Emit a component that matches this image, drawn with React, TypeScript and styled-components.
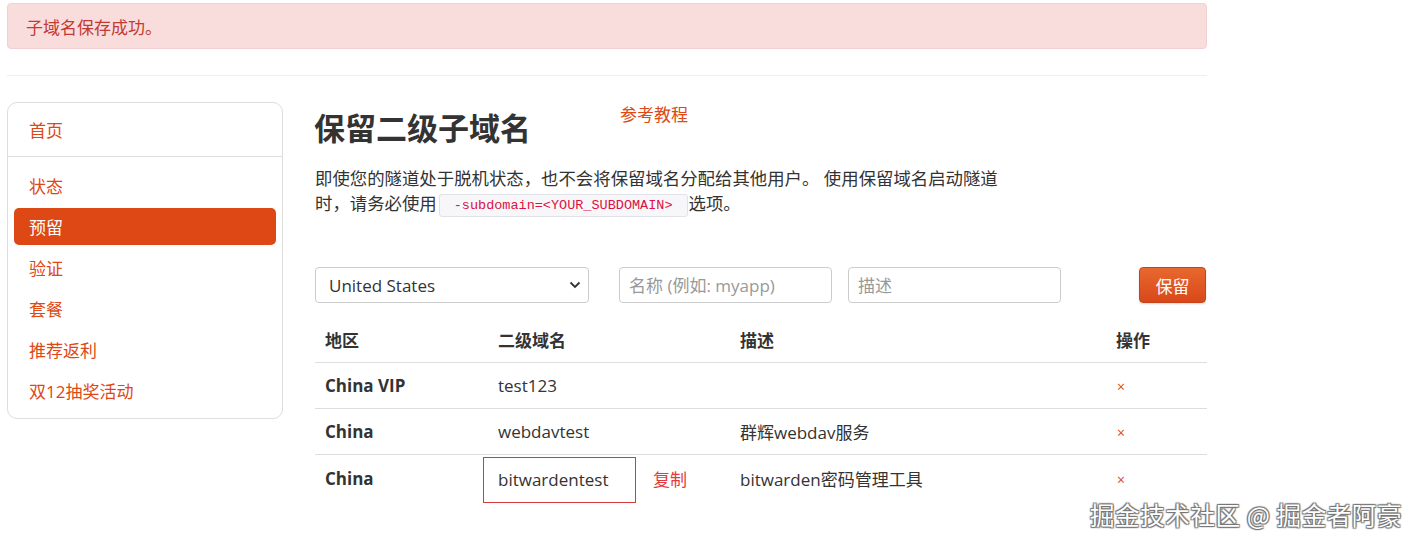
import React from "react";
import styled, { createGlobalStyle } from "styled-components";

const Global = createGlobalStyle`
  html, body { margin: 0; padding: 0; background: #fff; }
  body {
    font-family: "Open Sans", "Noto Sans CJK SC", sans-serif;
    color: #333;
    font-size: 17px;
  }
  * { box-sizing: border-box; }
`;

const ORANGE = "#dd4814";
const CJK = `"Open Sans", "Noto Sans CJK SC", sans-serif`;

const Page = styled.div`
  position: relative;
  width: 1419px;
  height: 543px;
  padding: 3px 0 0 7px;
  overflow: hidden;
`;

const Container = styled.div`
  width: 1200px;
`;

const Alert = styled.div`
  height: 46px;
  background: #f9dddd;
  border: 1px solid #f3cfcf;
  border-radius: 4px;
  color: #c23a32;
  display: flex;
  align-items: center;
  padding-left: 18px;
  font-size: 17px;
`;

const Rule = styled.hr`
  border: none;
  border-top: 1px solid #eee;
  margin: 26px 0 26px;
`;

const Layout = styled.div`
  display: grid;
  grid-template-columns: 276px 892px;
  column-gap: 32px;
  align-items: start;
`;

const Sidebar = styled.nav`
  border: 1px solid #ddd;
  border-radius: 10px;
  background: #fff;
`;

const SideHead = styled.a`
  display: flex;
  align-items: center;
  height: 54px;
  padding-left: 21px;
  color: ${ORANGE};
  border-bottom: 1px solid #ddd;
  text-decoration: none;
`;

const SideList = styled.div`
  display: flex;
  flex-direction: column;
  gap: 4px;
  padding: 10px 6px 9px;
`;

const SideItem = styled.a<{ $active?: boolean }>`
  display: flex;
  align-items: center;
  height: 37px;
  padding-left: 15px;
  border-radius: 5px;
  text-decoration: none;
  color: ${(p) => (p.$active ? "#fff" : ORANGE)};
  background: ${(p) => (p.$active ? ORANGE : "transparent")};
`;

const Main = styled.main`
  display: flex;
  flex-direction: column;
`;

const TitleRow = styled.div`
  display: flex;
  align-items: flex-start;
  height: 60px;
`;

const Title = styled.h1`
  margin: 6px 0 0 -1px;
  font-size: 31px;
  font-weight: 700;
  color: #333;
  line-height: 40px;
  font-family: ${CJK};
`;

const DocLink = styled.a`
  color: ${ORANGE};
  margin: 1px 0 0 89px;
  font-size: 17px;
  text-decoration: none;
  line-height: 24px;
`;

const Lead = styled.p`
  margin: 4px 0 0;
  max-width: 700px;
  line-height: 25px;
  font-size: 17.4px;
`;

const Code = styled.code`
  display: inline-block;
  font-family: "Liberation Mono", "DejaVu Sans Mono", monospace;
  font-size: 13.5px;
  line-height: 21px;
  color: #d14;
  background: #f7f7f9;
  border: 1px solid #e1e1e8;
  border-radius: 3px;
  padding: 0 14px;
  margin: 0 1px 0 2px;
  vertical-align: 1px;
`;

const FormRow = styled.form`
  display: flex;
  align-items: center;
  margin-top: 50px;
  height: 36px;
`;

const Select = styled.div`
  width: 274px;
  height: 36px;
  border: 1px solid #ccc;
  border-radius: 4px;
  display: flex;
  align-items: center;
  justify-content: space-between;
  padding: 0 7px 0 13px;
  color: #333;
  font-size: 17px;
`;

const Field = styled.input<{ $ml: number }>`
  width: 213px;
  height: 36px;
  margin-left: ${(p) => p.$ml}px;
  border: 1px solid #ccc;
  border-radius: 4px;
  padding: 0 9px;
  font-size: 17px;
  font-family: ${CJK};
  color: #333;
  &::placeholder { color: #999; }
`;

const Button = styled.button`
  margin-left: auto;
  margin-right: 1px;
  width: 67px;
  height: 36px;
  border: 1px solid #c8431a;
  border-radius: 4px;
  background: linear-gradient(#e8682f, #d9481a);
  color: #fff;
  font-size: 17px;
  font-family: ${CJK};
  box-shadow: 0 1px 2px rgba(0,0,0,0.15);
`;

const Table = styled.table`
  margin-top: 15px;
  width: 892px;
  border-collapse: collapse;
  table-layout: fixed;
`;

const Th = styled.th<{ $w: number }>`
  width: ${(p) => p.$w}px;
  text-align: left;
  font-weight: 700;
  height: 44px;
  padding: 0 10px;
  border-bottom: 1px solid #ddd;
  font-size: 17px;
`;

const Tr = styled.tr<{ $last?: boolean }>`
  border-bottom: ${(p) => (p.$last ? "none" : "1px solid #ddd")};
`;

const Td = styled.td<{ $bold?: boolean }>`
  height: 46px;
  padding: 0 10px;
  font-weight: ${(p) => (p.$bold ? 700 : 400)};
  font-size: 17px;
  vertical-align: middle;
`;

const Delete = styled.a`
  color: ${ORANGE};
  font-size: 14px;
  padding-left: 1px;
  text-decoration: none;
`;

const CopyWrap = styled.div`
  display: flex;
  align-items: center;
  gap: 17px;
`;

const Boxed = styled.span`
  display: inline-flex;
  align-items: center;
  height: 46px;
  width: 153px;
  margin: 2px 0 0 -15px;
  padding-left: 14px;
  border: 1px solid #d23a3f;
`;

const CopyLink = styled.span`
  color: #e4393c;
  font-size: 17px;
`;

const Watermark = styled.div`
  position: absolute;
  left: 1090px;
  top: 497px;
  font-size: 24.5px;
  color: #fff;
  font-family: "Noto Sans CJK SC", sans-serif;
  letter-spacing: 0.6px;
  text-shadow: 0 0 1px #666, 1px 1px 1px #777, -1px -1px 1px #777, 1px -1px 1px #777, -1px 1px 1px #777;
`;

const Chevron = () => (
  <svg width="12" height="8" viewBox="0 0 12 8">
    <path d="M1.5 1.5 L6 6 L10.5 1.5" fill="none" stroke="#333" strokeWidth="1.8" />
  </svg>
);

const rows = [
  { region: "China VIP", sub: "test123", desc: "" },
  { region: "China", sub: "webdavtest", desc: "群辉webdav服务" },
  { region: "China", sub: "bitwardentest", desc: "bitwarden密码管理工具", boxed: true },
];

export default function App() {
  return (
    <>
      <Global />
      <Page>
        <Container>
          <Alert>子域名保存成功。</Alert>
          <Rule />
          <Layout>
            <Sidebar>
              <SideHead>首页</SideHead>
              <SideList>
                <SideItem>状态</SideItem>
                <SideItem $active>预留</SideItem>
                <SideItem>验证</SideItem>
                <SideItem>套餐</SideItem>
                <SideItem>推荐返利</SideItem>
                <SideItem>双12抽奖活动</SideItem>
              </SideList>
            </Sidebar>
            <Main>
              <TitleRow>
                <Title>保留二级子域名</Title>
                <DocLink>参考教程</DocLink>
              </TitleRow>
              <Lead>
                即使您的隧道处于脱机状态，也不会将保留域名分配给其他用户。 使用保留域名启动隧道时，请务必使用<Code>-subdomain=&lt;YOUR_SUBDOMAIN&gt;</Code>选项。
              </Lead>
              <FormRow onSubmit={(e) => e.preventDefault()}>
                <Select>
                  <span>United States</span>
                  <Chevron />
                </Select>
                <Field $ml={30} placeholder="名称 (例如: myapp)" />
                <Field $ml={16} placeholder="描述" />
                <Button type="button">保留</Button>
              </FormRow>
              <Table>
                <thead>
                  <tr>
                    <Th $w={173}>地区</Th>
                    <Th $w={242}>二级域名</Th>
                    <Th $w={376}>描述</Th>
                    <Th $w={101}>操作</Th>
                  </tr>
                </thead>
                <tbody>
                  {rows.map((r, i) => (
                    <Tr key={i} $last={i === rows.length - 1}>
                      <Td $bold>{r.region}</Td>
                      <Td>
                        {r.boxed ? (
                          <CopyWrap>
                            <Boxed>{r.sub}</Boxed>
                            <CopyLink>复制</CopyLink>
                          </CopyWrap>
                        ) : (
                          r.sub
                        )}
                      </Td>
                      <Td>{r.desc}</Td>
                      <Td>
                        <Delete>×</Delete>
                      </Td>
                    </Tr>
                  ))}
                </tbody>
              </Table>
            </Main>
          </Layout>
        </Container>
        <Watermark>掘金技术社区 @ 掘金者阿豪</Watermark>
      </Page>
    </>
  );
}
